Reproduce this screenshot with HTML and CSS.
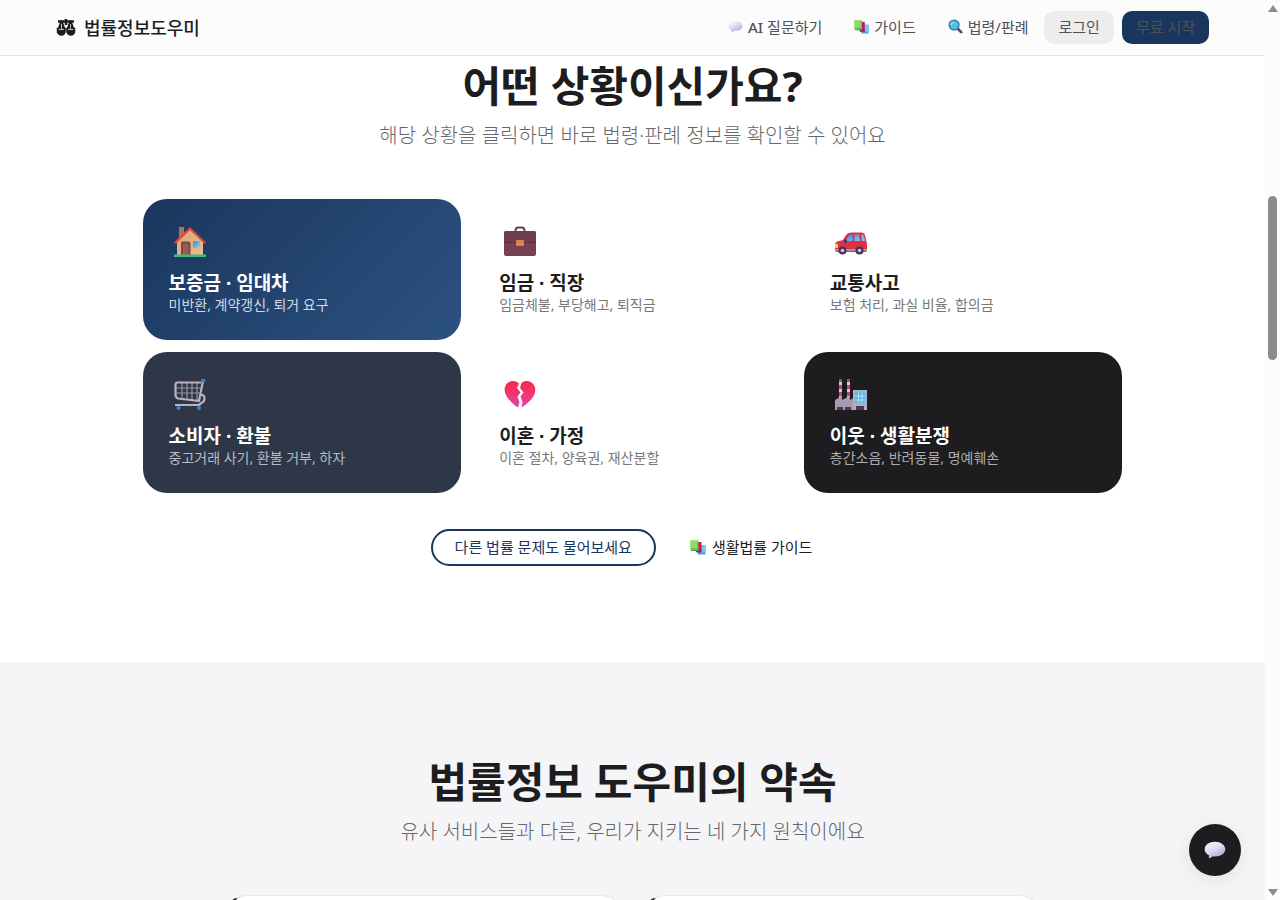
FILE: index.html
```html
<!DOCTYPE html>
<html lang="ko">
<head>
    <meta charset="UTF-8">
    <meta name="viewport" content="width=device-width, initial-scale=1.0">
    <title>법률정보도우미</title>
    <link rel="stylesheet" href="styles.css">
</head>
<body>
    <svg class="defs" aria-hidden="true">
        <defs>
            <linearGradient id="g-bubble" x1="0" y1="0" x2="0.6" y2="1">
                <stop offset="0" stop-color="#fbf7fd"/><stop offset="0.5" stop-color="#e5def3"/><stop offset="1" stop-color="#b5a6d8"/>
            </linearGradient>
            <linearGradient id="g-heart" x1="0" y1="0" x2="0" y2="1">
                <stop offset="0" stop-color="#f8294f"/><stop offset="0.4" stop-color="#f2336a"/><stop offset="1" stop-color="#dd45b4"/>
            </linearGradient>
            <linearGradient id="g-wall" x1="0" y1="0" x2="1" y2="1">
                <stop offset="0" stop-color="#d9a57f"/><stop offset="1" stop-color="#edbb8b"/>
            </linearGradient>
            <linearGradient id="g-glass" x1="0" y1="0" x2="1" y2="1">
                <stop offset="0" stop-color="#2b8de6"/><stop offset="1" stop-color="#8ad3fb"/>
            </linearGradient>
            <symbol id="bubble" viewBox="0 0 32 32">
                <path fill="url(#g-bubble)" d="M16 4C7.500 4 1 8.500 1 15c0 4 2.500 7 6.500 9-.2 2-1 3.500-.3 4 .8.5 4-1.500 5.800-2.800 1 .2 2 .3 3 .3 8.500 0 15-4.500 15-10.500S24.500 4 16 4z"/>
            </symbol>
            <symbol id="books" viewBox="0 0 32 32">
                <path fill="#4d9ce8" d="M14 12h17v19H16z"/><path fill="#7cc1f5" d="M23 12h8v15h-8z"/>
                <path fill="#c01f5c" d="M12 6h11v20H12z"/><path fill="#8a2a6d" d="M12 23h11v4H13z"/>
                <path fill="#6cc644" d="M1 3h16v19H1z"/><path fill="#90dc62" d="M1 3h13v15H1z"/><path fill="#3f9b4c" d="M1 22h15v2H3z"/>
            </symbol>
            <symbol id="search" viewBox="0 0 32 32">
                <path stroke="#6f3a72" stroke-width="6" stroke-linecap="round" d="M21 21l7 7"/>
                <circle cx="13" cy="13" r="10.500" fill="#50bdeb" stroke="#3b7ba5" stroke-width="3"/>
                <path fill="none" stroke="#8cdcf8" stroke-width="3" d="M7 13a6 6 0 0 1 6-6"/>
            </symbol>
            <symbol id="house" viewBox="0 0 32 32">
                <path fill="#a8765c" d="M5 1h5v12H5z"/>
                <path fill="url(#g-wall)" d="M3 15L16 3l13 12v15H3z"/>
                <path fill="#7b4b45" d="M7 17q0-1.500 1.500-1.500h6.500q1.500 0 1.500 1.500v12.500H7z"/>
                <path fill="#925f54" d="M9 18h5.500v11H9z"/>
                <rect x="19" y="15" width="7" height="7" rx="1" fill="url(#g-glass)"/>
                <path fill="#3dbb7c" d="M0 28.500h32V31H0z"/>
                <path fill="none" stroke="#e4472f" stroke-width="2.400" stroke-linecap="round" stroke-linejoin="round" d="M1.500 16.500L16 2.500l14.500 14"/>
            </symbol>
            <symbol id="case" viewBox="0 0 32 32">
                <path fill="none" stroke="#5d4053" stroke-width="2" d="M11.500 6V4.500q0-3 3-3h3q3 0 3 3V6"/>
                <rect y="5" width="32" height="25" rx="2" fill="#764253"/>
                <path fill="#6f3f50" d="M0 7q0-2 2-2h28q2 0 2 2v9H0z"/>
                <path fill="#532e43" d="M0 16h32v1H0z"/>
                <rect x="12" y="14" width="8" height="6" rx="1" fill="#dd8054"/>
            </symbol>
            <symbol id="car" viewBox="0 0 32 32">
                <path fill="#df3146" d="M8 14l3-5q1.500-2.500 5-2.500h11q2.500 0 3 2.500l2 9v7q0 1-2 1H2q-2 0-2-2v-5q0-3.500 4-4z"/>
                <path fill="url(#g-glass)" d="M11 15l2.500-5q.5-1.500 2.500-1.500h1.500V15zM19.500 8.500H24l1 6.500h-5.500zM26 8.500h1.500q1 0 1.500 2l1 4.500h-3z"/>
                <path fill="#493559" d="M9 13l3 1v3H9z"/>
                <path fill="#f8cf57" d="M0 18h3v4H0z"/><path fill="#a792b0" d="M0 23h32v2H0z"/>
                <circle cx="7.500" cy="24.500" r="4" fill="#463354"/><circle cx="24.500" cy="24.500" r="4" fill="#463354"/>
                <circle cx="7.500" cy="24.500" r="1.800" fill="#d1c6df"/><circle cx="24.500" cy="24.500" r="1.800" fill="#d1c6df"/>
            </symbol>
            <symbol id="cart" viewBox="0 0 32 32" fill="none">
                <path stroke="#9a95a6" stroke-width="1.200" d="M8 4v16M13 4v16M18 4v17M23 4v17M2 9h25M2 14h25"/>
                <path stroke="#b9b3c0" stroke-width="2.200" stroke-linejoin="round" d="M29 2l-4 20L4 19.500Q2 19 1.500 16V6q0-2.500 2-2.500H27M26 16h2q2.500 0 2.500 3.500T27 24q-1 2-4 2H1"/>
                <path stroke="#3e83db" stroke-width="3" stroke-linecap="round" d="M28.500 1.500h1.500"/>
                <circle cx="4.500" cy="29" r="2" fill="#3e83db"/><circle cx="25" cy="29" r="2" fill="#3e83db"/>
            </symbol>
            <symbol id="heart" viewBox="0 0 32 32">
                <path fill="url(#g-heart)" d="M15 4.500C11 .5 4 1.500 1.500 6.500-1 12 2 17 5 20.500c3 3.500 6 6.500 9 8l1.500-5-2-6 3-4-3.500-4.500z"/>
                <path fill="url(#g-heart)" d="M17.500 4c4-3.500 10.500-2 13 3 2 5 0 9.500-3 13-3 3.500-6.500 6.500-10 8.500l1-5.500-2-5.500 3-4-3.500-4.500z"/>
            </symbol>
            <symbol id="factory" viewBox="0 0 32 32">
                <path fill="#d7c8d8" d="M4 0h3v20H4zM12 0h3v20h-3z"/>
                <path fill="#c83d6d" d="M4 0h3v3H4zM4 6h3v4H4zM4 13h3v4H4zM12 0h3v3h-3zM12 6h3v4h-3zM12 13h3v4h-3z"/>
                <path fill="#a49bae" d="M0 21l7-4v4l8-4v4l5-3v13H0z"/>
                <path fill="#b6adc0" d="M18 11h14v20H18z"/>
                <path fill="#4bbcf0" d="M20 13h10v11H20z"/>
                <path stroke="#b6dff5" stroke-width="1" d="M20 17h10M20 21h10M23.500 13v11M27 13v11"/>
                <path fill="#493957" d="M2 28h6v3H2zM10 28h6v3h-6zM21 27h8v4h-8z"/>
            </symbol>
        </defs>
    </svg>

    <div class="page">
        <header class="header">
            <a class="logo" href="#">
                <svg class="logo-icon" viewBox="0 0 20 18" fill="none" stroke="#1d1d1f">
                    <path stroke-width="2.500" d="M2 3.500h16M10 1v6"/>
                    <path fill="#1d1d1f" stroke-width="2" stroke-linejoin="round" d="M5.500 3l-3 8h6zM14.500 3l-3 8h6z"/>
                    <path fill="#1d1d1f" stroke-width="1.500" d="M1.500 10.500h7.500V14q-1 3-3.700 3t-3.800-3zM11 10.500h7.500V14q-1 3-3.700 3T11 14z"/>
                    <path stroke="#bdbdbf" stroke-width="1" d="M2.500 11.500h5.500M12 11.500h5.500M5.500 6v5M14.500 6v5"/>
                </svg>
                <span>법률정보도우미</span>
            </a>
            <nav class="nav">
                <a class="nav-link" href="#"><svg><use href="#bubble"/></svg><span><b>AI</b> 질문하기</span></a>
                <a class="nav-link" href="#"><svg><use href="#books"/></svg><span>가이드</span></a>
                <a class="nav-link" href="#"><svg><use href="#search"/></svg><span>법령/판례</span></a>
                <button class="nav-button">로그인</button>
                <button class="nav-button start">무료 시작</button>
            </nav>
        </header>

        <main>
            <section class="section situations">
                <h2>어떤 상황이신가요?</h2>
                <p class="lead">해당 상황을 클릭하면 바로 법령·판례 정보를 확인할 수 있어요</p>
                <div class="cards">
                    <a class="card blue" href="#">
                        <svg><use href="#house"/></svg>
                        <h3>보증금 · 임대차</h3>
                        <p>미반환, 계약갱신, 퇴거 요구</p>
                    </a>
                    <a class="card" href="#">
                        <svg><use href="#case"/></svg>
                        <h3>임금 · 직장</h3>
                        <p>임금체불, 부당해고, 퇴직금</p>
                    </a>
                    <a class="card" href="#">
                        <svg><use href="#car"/></svg>
                        <h3>교통사고</h3>
                        <p>보험 처리, 과실 비율, 합의금</p>
                    </a>
                    <a class="card slate" href="#">
                        <svg><use href="#cart"/></svg>
                        <h3>소비자 · 환불</h3>
                        <p>중고거래 사기, 환불 거부, 하자</p>
                    </a>
                    <a class="card" href="#">
                        <svg><use href="#heart"/></svg>
                        <h3>이혼 · 가정</h3>
                        <p>이혼 절차, 양육권, 재산분할</p>
                    </a>
                    <a class="card black" href="#">
                        <svg><use href="#factory"/></svg>
                        <h3>이웃 · 생활분쟁</h3>
                        <p>층간소음, 반려동물, 명예훼손</p>
                    </a>
                </div>
                <div class="actions">
                    <a class="pill outline" href="#">다른 법률 문제도 물어보세요</a>
                    <a class="pill" href="#"><svg><use href="#books"/></svg><span>생활법률 가이드</span></a>
                </div>
            </section>

            <section class="section promises">
                <h2>법률정보 도우미의 약속</h2>
                <p class="lead">유사 서비스들과 다른, 우리가 지키는 네 가지 원칙이에요</p>
                <div class="promise-grid">
                    <div class="promise"></div>
                    <div class="promise"></div>
                </div>
            </section>
        </main>
    </div>

    <div class="scrollbar" aria-hidden="true">
        <span class="arrow up"></span>
        <span class="thumb"></span>
        <span class="arrow down"></span>
    </div>

    <button class="chat" aria-label="AI 질문하기"><svg><use href="#bubble"/></svg></button>
</body>
</html>
```
FILE: styles.css
```css
* {
    box-sizing: border-box;
}

html, body {
    margin: 0;
    height: 100%;
    overflow: hidden;
}

body {
    display: grid;
    grid-template-columns: 1fr 15px;
    font-family: "Noto Sans", "Noto Sans CJK KR", sans-serif;
    color: #1d1d1f;
    background: #fff;
}

h2, h3, p {
    margin: 0;
}

a {
    color: inherit;
    text-decoration: none;
}

button {
    border: none;
    font-family: inherit;
    cursor: pointer;
}

.defs {
    position: absolute;
    width: 0;
    height: 0;
}

.page {
    height: 100vh;
    overflow: hidden;
}

/* header */
.header {
    display: flex;
    align-items: center;
    justify-content: space-between;
    height: 56px;
    padding: 0 56px;
    background: #fcfcfd;
    border-bottom: 1px solid #e3e3e5;
}

.logo {
    display: flex;
    align-items: center;
    gap: 8px;
    padding-bottom: 2px;
    font-size: 18px;
    font-weight: 500;
}

.logo-icon {
    width: 20px;
    height: 18px;
}

.nav {
    display: flex;
    align-items: center;
}

.nav-link {
    display: flex;
    align-items: center;
    gap: 5px;
    padding: 0 16px 2px;
    font-size: 15px;
    color: #515154;
}

.nav-link b {
    font-weight: 500;
}

.nav-link svg {
    width: 15px;
    height: 15px;
}

.nav-button {
    height: 33px;
    padding: 0 14px 2px;
    border-radius: 10px;
    font-size: 15px;
    line-height: 20px;
    color: #515154;
    background: #ededee;
}

.nav-button.start {
    margin-left: 8px;
    background: #1a365d;
}

/* sections */
.section {
    padding: 96px 24px;
    text-align: center;
}

.section h2 {
    font-size: 42px;
    line-height: 48px;
    font-weight: 700;
}

.lead {
    margin-top: 14px;
    font-size: 20px;
    line-height: 24px;
    font-weight: 300;
    color: #66666a;
}

.situations {
    padding-top: 6px;
}

.cards {
    display: grid;
    grid-template-columns: repeat(3, 1fr);
    gap: 12px;
    max-width: 980px;
    margin: 51px auto 0;
    text-align: left;
}

.card {
    height: 141px;
    padding: 27px 26px 0;
    border-radius: 24px;
}

.card svg {
    display: block;
    width: 32px;
    height: 32px;
    margin: 0 0 14px 5px;
}

.card h3 {
    font-size: 19px;
    line-height: 22px;
    font-weight: 700;
}

.card p {
    font-size: 14px;
    line-height: 22px;
    color: #78787b;
}

.card.blue {
    background: linear-gradient(135deg, #1a365d, #2c5282);
}

.card.slate {
    background: #2d3748;
}

.card.black {
    background: #1d1d1f;
}

.blue h3, .slate h3, .black h3 {
    color: #fff;
}

.blue p {
    color: #d0d8e3;
}

.slate p {
    color: #b5bac3;
}

.black p {
    color: #acacae;
}

.actions {
    display: flex;
    justify-content: center;
    gap: 12px;
    margin-top: 36px;
}

.pill {
    display: flex;
    align-items: center;
    gap: 6px;
    height: 37px;
    padding: 0 22px 2px;
    border-radius: 20px;
    font-size: 15px;
}

.pill svg {
    width: 16px;
    height: 16px;
}

.pill.outline {
    border: 2px solid #1a365d;
    color: #1a365d;
}

.promises {
    background: #f5f5f7;
}

.promise-grid {
    display: grid;
    grid-template-columns: repeat(2, 1fr);
    gap: 16px;
    max-width: 820px;
    margin: 51px auto 0;
}

.promise {
    height: 180px;
    border: 1px solid #e8e8ea;
    border-left: 4px solid #1d1d1f;
    border-radius: 24px;
    background: #fff;
}

/* scrollbar */
.scrollbar {
    display: grid;
    grid-template-rows: 196px 164px 1fr;
    justify-items: center;
    height: 100vh;
    background: #fcfcfc;
}

.thumb {
    width: 9px;
    border-radius: 5px;
    background: #8b8b8b;
}

.arrow {
    width: 0;
    border: 5px solid transparent;
    border-top: none;
    border-bottom: 7px solid #8b8b8b;
}

.arrow.up {
    align-self: start;
    margin-top: 5px;
}

.arrow.down {
    align-self: end;
    margin-bottom: 4px;
    border-top: 7px solid #8b8b8b;
    border-bottom: none;
}

/* floating chat button */
.chat {
    position: fixed;
    right: 39px;
    bottom: 24px;
    display: flex;
    align-items: center;
    justify-content: center;
    width: 52px;
    height: 52px;
    padding: 0;
    border-radius: 50%;
    background: #1d1d1f;
    box-shadow: 0 4px 20px rgba(0, 0, 0, 0.08);
}

.chat svg {
    width: 22px;
    height: 22px;
}
```
